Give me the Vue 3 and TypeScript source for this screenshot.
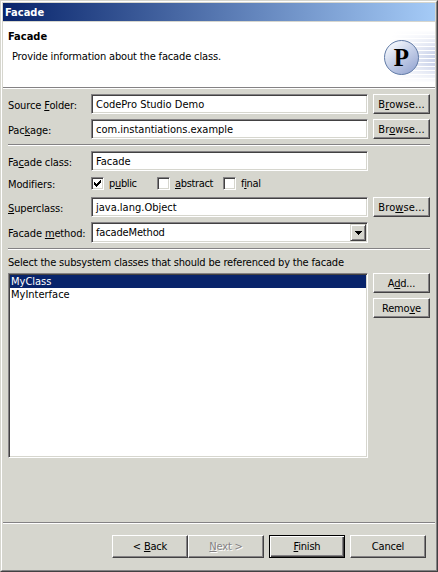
<script setup lang="ts">
import { ref } from 'vue'

interface Modifier {
  before: string
  key: string
  after: string
  checked: boolean
}

const sourceFolder = ref('CodePro Studio Demo')
const packageName = ref('com.instantiations.example')
const className = ref('Facade')
const superclass = ref('java.lang.Object')
const method = ref('facadeMethod')
const modifiers = ref<Modifier[]>([
  { before: 'p', key: 'u', after: 'blic', checked: true },
  { before: '', key: 'a', after: 'bstract', checked: false },
  { before: 'f', key: 'i', after: 'nal', checked: false },
])
const classes = ['MyClass', 'MyInterface']
const selected = ref(0)
</script>

<template>
  <div class="window">
    <div class="inner">
      <header class="titlebar">Facade</header>
      <section class="banner">
        <div class="heading">
          <h1>Facade</h1>
          <p>Provide information about the facade class.</p>
        </div>
        <svg class="logo" width="55" height="65" viewBox="0 0 55 65">
          <defs>
            <linearGradient id="fade" x1="0" x2="1" y1="0" y2="0">
              <stop offset="0" stop-color="#fff" />
              <stop offset="1" stop-color="#fff" stop-opacity="0" />
            </linearGradient>
            <linearGradient id="fadeY" x1="0" x2="0" y1="0" y2="1">
              <stop offset="0" stop-color="#fff" />
              <stop offset=".45" stop-color="#fff" stop-opacity="0" />
              <stop offset=".65" stop-color="#fff" stop-opacity="0" />
              <stop offset="1" stop-color="#fff" />
            </linearGradient>
            <linearGradient id="ball" x1=".2" x2=".8" y1=".1" y2=".9">
              <stop offset="0" stop-color="#f4f7fc" />
              <stop offset=".45" stop-color="#c9d3ea" />
              <stop offset="1" stop-color="#9dacd5" />
            </linearGradient>
            <pattern id="lines" width="4" height="4" patternUnits="userSpaceOnUse">
              <rect y="1" width="4" height="3" fill="#cbd3ea" />
            </pattern>
          </defs>
          <rect x="12" y="8" width="43" height="53" fill="url(#lines)" />
          <rect x="12" y="8" width="43" height="53" fill="url(#fade)" />
          <rect x="12" y="8" width="43" height="53" fill="url(#fadeY)" />
          <circle cx="21.5" cy="35.5" r="17" fill="url(#ball)" stroke="#617ba6" />
          <text x="13.8" y="44" class="letter">P</text>
        </svg>
      </section>

      <main class="form">
        <div class="row">
          <label>Source <u>F</u>older:</label>
          <div class="field">{{ sourceFolder }}</div>
          <button class="browse">B<u>r</u>owse...</button>
        </div>
        <div class="row">
          <label>Pac<u>k</u>age:</label>
          <div class="field">{{ packageName }}</div>
          <button class="browse">Br<u>o</u>wse...</button>
        </div>
        <div class="rule"></div>
        <div class="row">
          <label>Fa<u>c</u>ade class:</label>
          <div class="field">{{ className }}</div>
        </div>
        <div class="row modifiers">
          <label>Modifiers:</label>
          <div class="checks">
            <div v-for="m in modifiers" :key="m.key" class="check" @click="m.checked = !m.checked">
              <span class="box">
                <svg v-if="m.checked" width="9" height="9" viewBox="0 0 9 9" shape-rendering="crispEdges">
                  <path d="M1 3v3h1v1h1v1h1V7h1V6h1V5h1V4h1V1H7v1H6v1H5v1H4v1H3V4H2V3z" />
                </svg>
              </span>
              <span>{{ m.before }}<u>{{ m.key }}</u>{{ m.after }}</span>
            </div>
          </div>
        </div>
        <div class="row">
          <label><u>S</u>uperclass:</label>
          <div class="field">{{ superclass }}</div>
          <button class="browse">Bro<u>w</u>se...</button>
        </div>
        <div class="row combo-row">
          <label>Facade <u>m</u>ethod:</label>
          <div class="field combo">
            <span>{{ method }}</span>
            <i class="drop">
              <svg width="7" height="4" viewBox="0 0 7 4" shape-rendering="crispEdges">
                <path d="M0 0h7v1H6v1H5v1H4v1H3V3H2V2H1V1H0z" />
              </svg>
            </i>
          </div>
        </div>
        <div class="rule"></div>
        <p class="caption">Select the subsystem classes that should be referenced by the facade</p>
        <div class="picker">
          <ul class="list">
            <li v-for="(c, i) in classes" :key="c" :class="{ active: i === selected }" @click="selected = i">{{ c }}</li>
          </ul>
          <div class="side">
            <button>A<u>d</u>d...</button>
            <button>Remo<u>v</u>e</button>
          </div>
        </div>
      </main>

      <footer class="footer">
        <div class="nav">
          <button>&lt; <u>B</u>ack</button>
          <button class="disabled"><u>N</u>ext &gt;</button>
        </div>
        <button class="default"><u>F</u>inish</button>
        <button>Cancel</button>
      </footer>
    </div>
  </div>
</template>

<style>
body {
  margin: 0;
  overflow: hidden;
}
</style>

<style scoped>
* {
  box-sizing: border-box;
}
.window {
  width: 438px;
  height: 572px;
  background: #d6d6ce;
  border: 1px solid;
  border-color: #d6d6ce #424142 #424142 #d6d6ce;
  font: 11px/13px "DejaVu Sans Condensed", "DejaVu Sans", sans-serif;
  font-stretch: condensed;
  font-variant-ligatures: none;
  color: #000;
  cursor: default;
  white-space: nowrap;
}
.inner {
  height: 100%;
  border: 1px solid;
  border-color: #fff #848284 #848284 #fff;
  padding: 1px 1px 0;
  display: flex;
  flex-direction: column;
}
h1,
p,
ul {
  margin: 0;
  padding: 0;
}
u {
  text-underline-offset: 1px;
  text-decoration-thickness: 1px;
  text-decoration-skip-ink: none;
}
.titlebar {
  height: 18px;
  padding: 3px 2px 0;
  background: linear-gradient(90deg, #08246b, #a5cbf7);
  color: #fff;
  font-weight: bold;
}
.banner {
  height: 67px;
  margin-top: 1px;
  background: #fff;
  border-bottom: 1px solid #fff;
  box-shadow: inset 0 -1px #848284;
  display: flex;
  justify-content: space-between;
}
.heading {
  padding: 8px 0 0 5px;
}
h1 {
  font: inherit;
  font-weight: bold;
}
.heading p {
  margin: 7px 0 0 4px;
  letter-spacing: -0.15px;
}
.logo {
  display: block;
}
.letter {
  font: bold 25px "Liberation Serif", serif;
}
.form {
  padding: 5px 5px 0;
  flex: 1;
}
.row {
  display: grid;
  grid-template-columns: 78px 277px 57px;
  column-gap: 5px;
  height: 20px;
  margin-bottom: 5px;
}
label {
  padding-top: 5px;
  letter-spacing: -0.13px;
}
.field {
  background: #fff;
  border: 1px solid;
  border-color: #848284 #fff #fff #848284;
  box-shadow: inset 1px 1px #424142, inset -1px -1px #d6d6ce;
  padding: 3px 4px 0;
}
button {
  font: inherit;
  font-variant-ligatures: none;
  letter-spacing: -0.2px;
  color: inherit;
  background: #d6d6ce;
  border: 1px solid;
  border-color: #fff #424142 #424142 #fff;
  box-shadow: inset -1px -1px #848284;
  border-radius: 0;
  padding: 0;
  margin: 0;
}
.browse {
  letter-spacing: 0.1px;
}
.rule {
  height: 2px;
  border-top: 1px solid #848284;
  background: #fff;
  margin-bottom: 5px;
}
.modifiers {
  height: 16px;
}
.modifiers label {
  padding-top: 2px;
}
.row.modifiers {
  margin-top: 1px;
}
.checks {
  display: grid;
  grid-template-columns: 66px 66px 66px;
  letter-spacing: -0.35px;
}
.check {
  display: flex;
  gap: 5px;
  padding-top: 1px;
}
.box {
  width: 13px;
  height: 13px;
  background: #fff;
  border: 1px solid;
  border-color: #848284 #fff #fff #848284;
  box-shadow: inset 1px 1px #424142, inset -1px -1px #d6d6ce;
  padding: 1px;
}
.box svg {
  display: block;
}
.combo-row {
  height: 21px;
}
.combo {
  display: flex;
  justify-content: space-between;
  padding: 1px 1px 1px 4px;
}
.combo span {
  padding-top: 2px;
  letter-spacing: -0.15px;
}
.drop {
  width: 16px;
  background: #d6d6ce;
  border: 1px solid;
  border-color: #d6d6ce #424142 #424142 #d6d6ce;
  box-shadow: inset 1px 1px #fff, inset -1px -1px #848284;
  display: grid;
  place-items: center;
}
.drop svg {
  display: block;
}
.caption {
  padding: 1px 0 4px;
  letter-spacing: -0.18px;
}
.picker {
  display: flex;
  gap: 5px;
}
.list {
  width: 360px;
  height: 185px;
  list-style: none;
  background: #fff;
  border: 1px solid;
  border-color: #848284 #fff #fff #848284;
  box-shadow: inset 1px 1px #424142, inset -1px -1px #d6d6ce;
  padding: 1px;
}
li {
  height: 13px;
  padding-left: 1px;
}
.active {
  background: #08246b;
  color: #fff;
}
.side {
  display: grid;
  grid-template: 20px 20px / 57px;
  row-gap: 5px;
}
.footer {
  height: 48px;
  border-top: 1px solid #848284;
  box-shadow: inset 0 1px #fff;
  padding: 12px 9px 0 0;
  display: flex;
  justify-content: flex-end;
  gap: 5px;
}
.nav {
  display: flex;
}
.footer button {
  width: 76px;
  height: 23px;
}
.disabled {
  color: #848284;
  text-shadow: 1px 1px #fff;
}
.footer .default {
  border-color: #000;
  box-shadow: inset 1px 1px #fff, inset -1px -1px #424142, inset -2px -2px #848284;
}
</style>
